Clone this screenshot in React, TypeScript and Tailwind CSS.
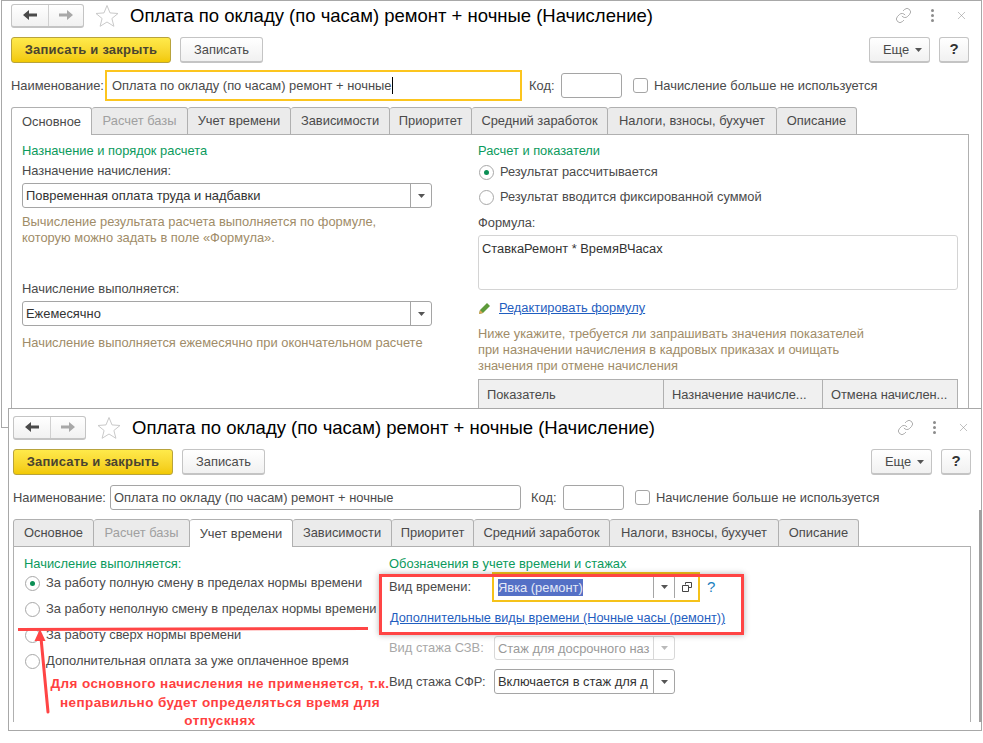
import { Link, X } from 'lucide-react';
import type { ReactNode } from 'react';

const TABS = [
  { label: 'Основное', width: 'w-[81px]' },
  { label: 'Расчет базы', width: 'w-[96px]', disabled: true },
  { label: 'Учет времени', width: 'w-[103px]' },
  { label: 'Зависимости', width: 'w-[99px]' },
  { label: 'Приоритет', width: 'w-[82px]' },
  { label: 'Средний заработок', width: 'w-[136px]' },
  { label: 'Налоги, взносы, бухучет', width: 'w-[169px]' },
  { label: 'Описание', width: 'w-[80px]' },
];

function Caret({ muted }: { muted?: boolean }) {
  return (
    <svg width="7" height="4" viewBox="0 0 7 4" className={muted ? 'opacity-40' : ''}>
      <path d="M0 0h7L3.5 4z" fill="#555" />
    </svg>
  );
}

function Radio({ checked, children }: { checked?: boolean; children: ReactNode }) {
  return (
    <div className="flex h-4 items-center">
      <span className="relative ml-px flex size-[15px] shrink-0 items-center justify-center rounded-full border border-[#a8a8a8] bg-white">
        {checked && <span className="size-[5px] rounded-full bg-[#0b8f55]" />}
      </span>
      <span className="ml-[6px] whitespace-nowrap">{children}</span>
    </div>
  );
}

function Select({ value, disabled, className }: { value: string; disabled?: boolean; className: string }) {
  return (
    <div className={`flex items-stretch rounded-[3px] border bg-white ${disabled ? 'border-[#d8d8d8] text-[#9a9a9a]' : 'border-[#a5a5a5] text-[#333]'} ${className}`}>
      <div className="flex-1 overflow-hidden whitespace-nowrap pl-[3px] leading-[23px]">{value}</div>
      <div className={`flex w-[21px] items-center justify-center border-l ${disabled ? 'border-[#d8d8d8]' : 'border-[#a5a5a5]'}`}>
        <Caret muted={disabled} />
      </div>
    </div>
  );
}

function Header({ focused, active }: { focused?: boolean; active: number }) {
  return (
    <>
      <div className="flex h-[25px] items-center">
        <div className="flex h-[24px] w-[73px] rounded-[3px] border border-b-2 border-[#c4c4c4] bg-gradient-to-b from-white to-[#f1f1f1]">
          <div className="flex w-[37px] items-center justify-center border-r border-[#d0d0d0]">
            <svg width="16" height="12" viewBox="0 0 16 12">
              <path d="M15 4.5H7V1L1 6l6 5V7.5h8z" fill="#4a4a4a" />
            </svg>
          </div>
          <div className="flex flex-1 items-center justify-center">
            <svg width="16" height="12" viewBox="0 0 16 12">
              <path d="M1 4.5h8V1l6 5-6 5V7.5H1z" fill="#a8a8a8" />
            </svg>
          </div>
        </div>
        <svg width="24" height="23" viewBox="0 0 24 23" className="ml-[11px]">
          <path d="M12 1.5l3 7.4 8 .6-6.100 5 2 7.800L12 18l-6.900 4.300 2-7.800-6.100-5 8-.6z" fill="#fff" stroke="#c9c9c9" />
        </svg>
        <div className="ml-[11px] whitespace-nowrap text-[18.500px] leading-[25px] text-black">
          Оплата по окладу (по часам) ремонт + ночные (Начисление)
        </div>
        <div className="ml-auto flex items-center text-[#8c8c8c]">
          <Link size={17} strokeWidth={1} />
          <div className="ml-[19px] flex flex-col gap-[2px]">
            <span className="size-[3px] rounded-full bg-[#8c8c8c]" />
            <span className="size-[3px] rounded-full bg-[#8c8c8c]" />
            <span className="size-[3px] rounded-full bg-[#8c8c8c]" />
          </div>
          <X size={13} strokeWidth={1} className="ml-[21px] mr-px" />
        </div>
      </div>
      <div className="mt-[9px] flex h-[26px] items-stretch">
        <div className="flex w-[160px] items-center justify-center rounded-[3px] border border-[#b8a33c] bg-gradient-to-b from-[#ffea4a] to-[#f2c900] text-[13px] font-bold tracking-[0.2px] text-[#4a4430]">
          Записать и закрыть
        </div>
        <div className="ml-[9px] flex w-[83px] items-center justify-center rounded-[3px] border border-b-2 border-[#c4c4c4] bg-gradient-to-b from-white to-[#f1f1f1]">
          Записать
        </div>
        <div className="ml-auto flex w-[61px] items-center justify-center gap-[6px] rounded-[3px] border border-b-2 border-[#c4c4c4] bg-gradient-to-b from-white to-[#f1f1f1] pl-[6px]">
          Еще <Caret />
        </div>
        <div className="ml-[9px] flex w-[30px] items-center justify-center rounded-[3px] border border-b-2 border-[#c4c4c4] bg-gradient-to-b from-white to-[#f1f1f1] text-[15px] font-bold text-[#333]">
          ?
        </div>
      </div>
      <div className="mt-[7px] flex h-[31px] items-center">
        <span className="w-[94px] whitespace-nowrap">Наименование:</span>
        {focused ? (
          <div className="flex h-[31px] w-[417px] items-center border-2 border-[#fcc51e] bg-white pl-[5px]">
            <span className="border-r border-black pr-px leading-[17px]">Оплата по окладу (по часам) ремонт + ночные</span>
          </div>
        ) : (
          <div className="ml-[3px] mr-[3px] flex h-[25px] w-[411px] items-center rounded-[3px] border border-[#a5a5a5] bg-white pl-[3px]">
            Оплата по окладу (по часам) ремонт + ночные
          </div>
        )}
        <span className="ml-[7px] w-[32px]">Код:</span>
        <div className="h-[25px] w-[61px] rounded-[3px] border border-[#a5a5a5] bg-white" />
        <div className="ml-[11px] size-[15px] rounded-[3px] border border-[#a5a5a5] bg-white" />
        <span className="ml-[6px] whitespace-nowrap">Начисление больше не используется</span>
      </div>
      <div className="relative z-10 mt-[6px] -mb-px flex h-[28px]">
        {TABS.map((tab, i) => (
          <div
            key={tab.label}
            className={`flex items-center justify-center rounded-t-[3px] border border-l-0 first:border-l border-[#b0b0b0] ${tab.width} ${
              i === active ? 'border-b-0 bg-white' : 'bg-[#ebebeb]'
            } ${tab.disabled ? 'text-[#a0a0a0]' : ''}`}
          >
            {tab.label}
          </div>
        ))}
      </div>
    </>
  );
}

function MainTab() {
  return (
    <div className="flex h-[300px] border border-[#b0b0b0] bg-white pt-2">
      <div className="w-[466px] pl-[10px]">
        <div className="leading-4 text-[#0b9a5c]">Назначение и порядок расчета</div>
        <div className="mt-1 leading-4">Назначение начисления:</div>
        <Select value="Повременная оплата труда и надбавки" className="mt-1 h-[25px] w-[410px]" />
        <div className="mt-[6px] leading-4 text-[#a08c68]">
          Вычисление результата расчета выполняется по формуле,
          <br />
          которую можно задать в поле «Формула».
        </div>
        <div className="mt-[35px] leading-4">Начисление выполняется:</div>
        <Select value="Ежемесячно" className="mt-1 h-[25px] w-[410px]" />
        <div className="mt-[9px] leading-4 text-[#a08c68]">Начисление выполняется ежемесячно при окончательном расчете</div>
      </div>
      <div className="w-[480px] text-[12.850px]">
        <div className="leading-4 text-[#0b9a5c]">Расчет и показатели</div>
        <div className="mt-[5px]">
          <Radio checked>Результат рассчитывается</Radio>
        </div>
        <div className="mt-[9px]">
          <Radio>Результат вводится фиксированной суммой</Radio>
        </div>
        <div className="mt-[10px] leading-4">Формула:</div>
        <div className="mt-1 h-[55px] rounded-[3px] border border-[#d4d4d4] px-[3px] pt-[3px] text-[#333]">СтавкаРемонт * ВремяВЧасах</div>
        <div className="mt-[10px] flex h-4 items-center">
          <svg width="14" height="14" viewBox="0 0 14 14">
            <path d="M1 13l1-4 7-7 3 3-7 7z" fill="#5d9a3a" />
            <path d="M1 13l1-4 3 3z" fill="#e0a45a" />
          </svg>
          <span className="ml-[7px] text-[#1f5ec0] underline">Редактировать формулу</span>
        </div>
        <div className="mt-[10px] leading-4 text-[#a08c68]">
          Ниже укажите, требуется ли запрашивать значения показателей
          <br />
          при назначении начисления в кадровых приказах и очищать
          <br />
          значения при отмене начисления
        </div>
        <div className="mt-[5px] flex h-[32px] border border-[#b0b0b0] bg-[#f0f0f0] leading-[30px]">
          <div className="w-[185px] border-r border-[#b0b0b0] pl-2">Показатель</div>
          <div className="w-[159px] border-r border-[#b0b0b0] pl-2">Назначение начисле...</div>
          <div className="flex-1 whitespace-nowrap pl-2">Отмена начислен...</div>
        </div>
      </div>
    </div>
  );
}

function TimeTab() {
  return (
    <div className="flex h-[176px] border border-b-0 border-[#b0b0b0] bg-white pt-[9px]">
      <div className="w-[375px] pl-[10px]">
        <div className="leading-4 text-[#0b9a5c]">Начисление выполняется:</div>
        <div className="mt-[3px] flex flex-col gap-[10px]">
          <Radio checked>За работу полную смену в пределах нормы времени</Radio>
          <Radio>За работу неполную смену в пределах нормы времени</Radio>
          <Radio>За работу сверх нормы времени</Radio>
          <Radio>Дополнительная оплата за уже оплаченное время</Radio>
        </div>
      </div>
      <div className="flex-1">
        <div className="leading-4 text-[#0b9a5c]">Обозначения в учете времени и стажах</div>
        <div className="flex h-[30px] items-center">
          <span className="w-[103px]">Вид времени:</span>
          <div className="flex h-[30px] w-[208px] items-stretch border-2 border-[#f5c21a] bg-white">
            <div className="flex flex-1 items-center pl-[4px]">
              <span className="bg-[#5470c6] leading-[17px] text-[#e4e9f7]">Явка (ремонт)</span>
            </div>
            <div className="my-[2px] flex w-[22px] items-center justify-center border-x border-[#a5a5a5]">
              <Caret />
            </div>
            <div className="flex w-[23px] items-center justify-center">
              <svg width="10" height="10" viewBox="0 0 10 10" fill="none" stroke="#444">
                <path d="M3.500 2.500V.5h6v5H7" />
                <path d="M.5 3.500h6v6h-6z" />
              </svg>
            </div>
          </div>
          <span className="ml-[7px] text-[15px] text-[#1a80c0]">?</span>
        </div>
        <div className="mt-2 pl-px text-[12.750px] leading-4 text-[#1f5ec0] underline">Дополнительные виды времени (Ночные часы (ремонт))</div>
        <div className="mt-[10px] flex items-center">
          <span className="w-[105px] whitespace-nowrap text-[#a8a8a8]">Вид стажа СЗВ:</span>
          <Select disabled value="Стаж для досрочного наз" className="h-[24px] w-[181px]" />
        </div>
        <div className="mt-[9px] flex items-center">
          <span className="w-[105px] whitespace-nowrap">Вид стажа СФР:</span>
          <Select value="Включается в стаж для д" className="h-[25px] w-[181px]" />
        </div>
      </div>
    </div>
  );
}

export default function App() {
  return (
    <div className="relative h-[743px] w-[983px] overflow-hidden bg-white font-['Liberation_Sans',Arial,sans-serif] text-[12.900px] text-[#4a4a4a]">
      <div className="absolute left-px top-0 h-[428px] w-[981px] overflow-hidden border border-[#a8a8a8] bg-white pl-[9px] pt-[2px]">
        <div className="w-[958px]">
          <Header focused active={0} />
          <MainTab />
        </div>
      </div>

      <div className="absolute left-2 top-[408px] h-[323px] w-[974px] border border-[#a8a8a8] bg-white pl-1 pt-[6px]">
        <div className="w-[958px]">
          <Header active={2} />
          <TimeTab />
        </div>
      </div>
      <div className="absolute left-[979px] top-[510px] h-[212px] w-[3px] bg-[#a0a0a0]" />

      <div className="absolute left-[379px] top-[574px] h-[61px] w-[365px] border-[3px] border-[#ff4545] shadow-[0_0_6px_rgba(0,0,0,0.3)]" />
      <svg className="absolute left-0 top-0" width="983" height="743" viewBox="0 0 983 743">
        <path d="M18 629.500L368 628.500" stroke="#ff4545" strokeWidth="3" />
        <path d="M48 712L41 638" stroke="#ff4545" strokeWidth="3" strokeLinecap="round" />
        <path d="M40 629l5.500 12h-11z" fill="#ff4545" />
      </svg>
      <div className="absolute left-[40px] top-[675px] w-[360px] text-center text-[13.500px] font-bold leading-[18.500px] tracking-[0.4px] text-[#ff4040]">
        Для основного начисления не применяется, т.к.
        <br />
        неправильно будет определяться время для
        <br />
        отпускнях
      </div>
    </div>
  );
}
